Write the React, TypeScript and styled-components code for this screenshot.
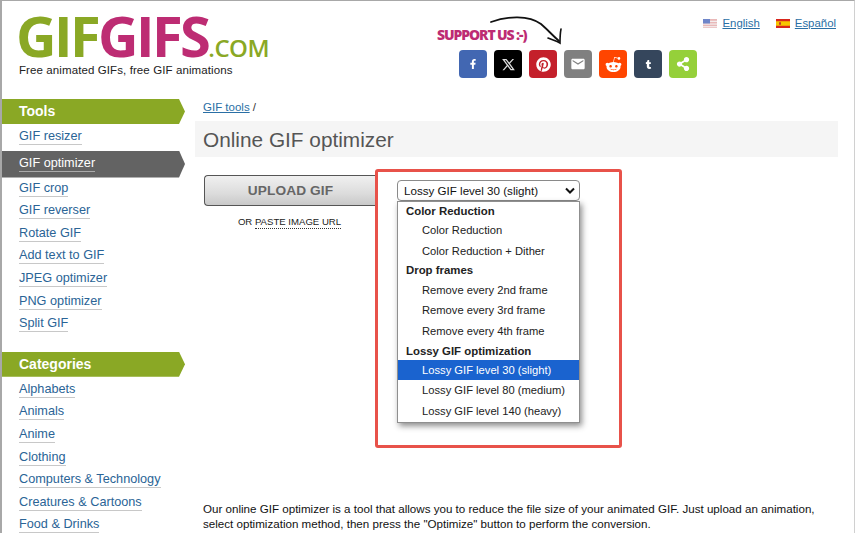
import styled, { createGlobalStyle } from "styled-components";
import { FaFacebookF, FaPinterest, FaRedditAlien, FaTumblr, FaShareAlt } from "react-icons/fa";
import { RiTwitterXLine } from "react-icons/ri";
import { MdEmail } from "react-icons/md";

const GlobalStyle = createGlobalStyle`
  html, body {
    margin: 0;
    height: 533px;
    overflow: hidden;
    background: #fff;
    font-family: "Liberation Sans", Arial, sans-serif;
  }
`;

const Page = styled.div`
  width: 855px;
  height: 533px;
  box-sizing: border-box;
  overflow: hidden;
  border-top: 1px solid #a8a8a8;
  border-left: 2px solid #a8a8a8;
  border-right: 1px solid #d0d0d0;
`;

const Header = styled.header`
  display: flex;
  height: 98px;
  box-sizing: border-box;
  padding-left: 17px;
`;

const LogoBlock = styled.div`
  width: 418px;
  padding-top: 6px;
`;

const Logo = styled.div`
  margin-left: -3px;
  font-family: "Open Sans", sans-serif;
  font-weight: 700;
  font-size: 56px;
  line-height: 56px;
  letter-spacing: -2.6px;
  color: #8aa825;
  white-space: nowrap;
`;

const LogoPink = styled.span`
  color: #bd2c73;
`;

const LogoCom = styled.span`
  font-size: 24px;
  font-weight: 600;
  line-height: 1;
  letter-spacing: -0.5px;
  color: #8aa825;
`;

const Tagline = styled.div`
  font-size: 11.5px;
  line-height: 14px;
  color: #222;
  letter-spacing: 0.1px;
`;

const SupportBlock = styled.div`
  position: relative;
  width: 264px;
  padding-top: 24px;
`;

const SupportText = styled.div`
  font-family: "Open Sans", sans-serif;
  font-weight: 800;
  font-size: 14px;
  line-height: 19px;
  letter-spacing: -1.1px;
  color: #bd2c73;
  white-space: nowrap;
`;

const ArrowDrawing = styled.svg`
  position: absolute;
  left: 52px;
  top: 15px;
`;

const ShareRow = styled.div`
  display: flex;
  gap: 7px;
  margin: 6px 0 0 22px;
`;

const ShareButton = styled.a<{ $bg: string }>`
  display: flex;
  align-items: center;
  justify-content: center;
  width: 28px;
  height: 28px;
  border-radius: 4px;
  color: #fff;
  font-size: 13px;
  background: ${(p) => p.$bg};
`;

const Languages = styled.div`
  display: flex;
  align-items: flex-start;
  gap: 16px;
  margin-left: auto;
  padding: 16px 18px 0 0;
  font-size: 11.4px;
`;

const Language = styled.a`
  display: flex;
  align-items: center;
  gap: 5px;
  color: #2a6fa5;
  text-decoration: underline;
`;

const Body = styled.div`
  display: flex;
`;

const Sidebar = styled.nav`
  width: 193px;
  flex: none;
`;

const SideHeading = styled.div<{ $gap?: number }>`
  height: 25px;
  width: 183px;
  box-sizing: border-box;
  margin-top: ${(p) => p.$gap ?? 0}px;
  padding-left: 17px;
  font-size: 14px;
  font-weight: bold;
  line-height: 25px;
  color: #fff;
  background: #8aa825;
  clip-path: polygon(0 0, 177px 0, 100% 50%, 177px 100%, 0 100%);
`;

const SideList = styled.div`
  display: flex;
  flex-direction: column;
  padding-top: 1px;
`;

const SideItem = styled.div<{ $active?: boolean }>`
  height: ${(p) => (p.$active ? 27 : 22.6)}px;
  width: 183px;
  box-sizing: border-box;
  margin: ${(p) => (p.$active ? "3px 0 -1px" : "0")};
  padding-left: 17px;
  font-size: 12.7px;
  line-height: ${(p) => (p.$active ? 25 : 23)}px;
  background: ${(p) => (p.$active ? "#636363" : "transparent")};
  clip-path: polygon(0 0, 177px 0, 100% 50%, 177px 100%, 0 100%);
`;

const SideLink = styled.a<{ $active?: boolean }>`
  color: ${(p) => (p.$active ? "#fff" : "#2a6496")};
  border-bottom: 1px solid ${(p) => (p.$active ? "#aaa" : "#c8c8c8")};
  padding-bottom: 1px;
  white-space: nowrap;
`;

const Main = styled.main`
  flex: 1;
  min-width: 0;
  position: relative;
`;

const Breadcrumb = styled.div`
  height: 21px;
  padding: 1px 0 0 8px;
  font-size: 11.5px;
  line-height: 14px;
  color: #333;
`;

const BreadcrumbLink = styled.a`
  color: #2a6fa5;
  text-decoration: underline;
`;

const TitleBar = styled.h1`
  margin: 0;
  width: 643px;
  height: 36px;
  padding-left: 8px;
  box-sizing: border-box;
  font-size: 20.8px;
  font-weight: normal;
  line-height: 38px;
  color: #555;
  background: #f5f5f5;
`;

const ToolRow = styled.div`
  display: flex;
  margin-top: 12px;
  padding-left: 9px;
`;

const UploadColumn = styled.div`
  width: 171px;
  flex: none;
  padding-top: 6px;
`;

const UploadButton = styled.div`
  height: 31px;
  width: 178px;
  box-sizing: border-box;
  border: 1px solid #555;
  border-right: 0;
  border-radius: 4px 0 0 4px;
  padding-right: 6px;
  text-align: center;
  font-size: 13.7px;
  font-weight: bold;
  line-height: 29px;
  color: #666;
  letter-spacing: 0.1px;
  background: linear-gradient(#f0f0f0, #dcdcdc 60%, #c9c9c9);
`;

const PasteLine = styled.div`
  margin-top: 10px;
  text-align: center;
  font-size: 9.6px;
  line-height: 12px;
  color: #222;
`;

const PasteLink = styled.span`
  border-bottom: 1px dotted #333;
  padding-bottom: 1px;
`;

const RedFrame = styled.div`
  position: relative;
  width: 247px;
  height: 279px;
  box-sizing: border-box;
  border: 3px solid #e8524a;
  border-radius: 3px;
  padding: 8px 0 0 19px;
  background: #fff;
`;

const SelectBox = styled.div`
  display: flex;
  align-items: center;
  justify-content: space-between;
  width: 183px;
  height: 21px;
  box-sizing: border-box;
  border: 1px solid #8a8a8a;
  border-radius: 4px;
  padding: 0 3px 0 6px;
  font-size: 11.6px;
  color: #111;
  background: #fff;
`;

const Menu = styled.div`
  width: 183px;
  height: 222px;
  box-sizing: border-box;
  border: 1px solid #8f8f8f;
  font-size: 11.2px;
  color: #222;
  background: #fff;
  box-shadow: 2px 3px 6px rgba(0, 0, 0, 0.45);
`;

const MenuGroup = styled.div`
  height: 18.3px;
  padding-left: 8px;
  font-size: 11.4px;
  font-weight: bold;
  line-height: 18.3px;
  color: #222;
`;

const MenuOption = styled.div<{ $selected?: boolean }>`
  height: 20.6px;
  padding-left: 24px;
  line-height: 20.6px;
  color: ${(p) => (p.$selected ? "#fff" : "#222")};
  background: ${(p) => (p.$selected ? "#1a63cf" : "transparent")};
`;

const Description = styled.p`
  margin: 53px 0 0;
  padding-left: 8px;
  width: 640px;
  font-size: 11.6px;
  line-height: 15px;
  color: #111;
`;

const shareButtons = [
  { bg: "#4267b2", icon: <FaFacebookF size={10} /> },
  { bg: "#000", icon: <RiTwitterXLine size={15} color="#ddd" /> },
  { bg: "#c4202b", icon: <FaPinterest size={15} /> },
  { bg: "#808080", icon: <MdEmail size={16} /> },
  { bg: "#ff4500", icon: <FaRedditAlien size={17} /> },
  { bg: "#35465c", icon: <FaTumblr size={9} /> },
  { bg: "#95d03a", icon: <FaShareAlt size={14} /> },
];

const tools = ["GIF resizer", "GIF optimizer", "GIF crop", "GIF reverser", "Rotate GIF", "Add text to GIF", "JPEG optimizer", "PNG optimizer", "Split GIF"];
const categories = ["Alphabets", "Animals", "Anime", "Clothing", "Computers & Technology", "Creatures & Cartoons", "Food & Drinks"];

const UsFlag = () => (
  <svg width="14" height="9" viewBox="0 0 14 10" preserveAspectRatio="none">
    <rect width="14" height="10" fill="#e9b8b8" />
    <rect y="2" width="14" height="1.2" fill="#f4f4f4" />
    <rect y="5" width="14" height="1.2" fill="#f4f4f4" />
    <rect y="8" width="14" height="1.2" fill="#f4f4f4" />
    <rect width="7" height="5" fill="#6f86c9" />
  </svg>
);

const EsFlag = () => (
  <svg width="14" height="9" viewBox="0 0 14 10" preserveAspectRatio="none">
    <rect width="14" height="10" fill="#d8261c" />
    <rect y="2.5" width="14" height="5" fill="#f7c600" />
    <rect x="3" y="3.6" width="2" height="2.8" fill="#c0392b" />
  </svg>
);

const App = () => {
  return (
    <Page>
      <GlobalStyle />
      <Header>
        <LogoBlock>
          <Logo>
            GIF<LogoPink>GIFS</LogoPink>
            <LogoCom>.COM</LogoCom>
          </Logo>
          <Tagline>Free animated GIFs, free GIF animations</Tagline>
        </LogoBlock>
        <SupportBlock>
          <SupportText>SUPPORT US :-)</SupportText>
          <ArrowDrawing width="76" height="30" viewBox="0 0 76 30" fill="none" stroke="#111" strokeLinecap="round">
            <path d="M2 6 C 18 0, 40 -1, 52 8 C 58 13, 62 18, 70 25" strokeWidth="1.8" />
            <path d="M59 22 C 64 24, 68 25, 71 27 C 71 22, 71 18, 72 13" strokeWidth="1.6" />
          </ArrowDrawing>
          <ShareRow>
            {shareButtons.map((b) => (
              <ShareButton key={b.bg} $bg={b.bg}>
                {b.icon}
              </ShareButton>
            ))}
          </ShareRow>
        </SupportBlock>
        <Languages>
          <Language>
            <UsFlag />
            English
          </Language>
          <Language>
            <EsFlag />
            Español
          </Language>
        </Languages>
      </Header>
      <Body>
        <Sidebar>
          <SideHeading>Tools</SideHeading>
          <SideList>
            {tools.map((t) => (
              <SideItem key={t} $active={t === "GIF optimizer"}>
                <SideLink $active={t === "GIF optimizer"}>{t}</SideLink>
              </SideItem>
            ))}
          </SideList>
          <SideHeading $gap={17}>Categories</SideHeading>
          <SideList>
            {categories.map((c) => (
              <SideItem key={c}>
                <SideLink>{c}</SideLink>
              </SideItem>
            ))}
          </SideList>
        </Sidebar>
        <Main>
          <Breadcrumb>
            <BreadcrumbLink>GIF tools</BreadcrumbLink> /
          </Breadcrumb>
          <TitleBar>Online GIF optimizer</TitleBar>
          <ToolRow>
            <UploadColumn>
              <UploadButton>UPLOAD GIF</UploadButton>
              <PasteLine>
                OR <PasteLink>PASTE IMAGE URL</PasteLink>
              </PasteLine>
            </UploadColumn>
            <RedFrame>
              <SelectBox>
                Lossy GIF level 30 (slight)
                <svg width="12" height="8" viewBox="0 0 12 8" fill="none" stroke="#111" strokeWidth="2">
                  <path d="M2 1.5 L6 5.5 L10 1.5" />
                </svg>
              </SelectBox>
              <Menu>
                <MenuGroup>Color Reduction</MenuGroup>
                <MenuOption>Color Reduction</MenuOption>
                <MenuOption>Color Reduction + Dither</MenuOption>
                <MenuGroup>Drop frames</MenuGroup>
                <MenuOption>Remove every 2nd frame</MenuOption>
                <MenuOption>Remove every 3rd frame</MenuOption>
                <MenuOption>Remove every 4th frame</MenuOption>
                <MenuGroup>Lossy GIF optimization</MenuGroup>
                <MenuOption $selected>Lossy GIF level 30 (slight)</MenuOption>
                <MenuOption>Lossy GIF level 80 (medium)</MenuOption>
                <MenuOption>Lossy GIF level 140 (heavy)</MenuOption>
              </Menu>
            </RedFrame>
          </ToolRow>
          <Description>
            Our online GIF optimizer is a tool that allows you to reduce the file size of your animated GIF. Just upload an animation,
            select optimization method, then press the "Optimize" button to perform the conversion.
          </Description>
        </Main>
      </Body>
    </Page>
  );
};

export default App;
